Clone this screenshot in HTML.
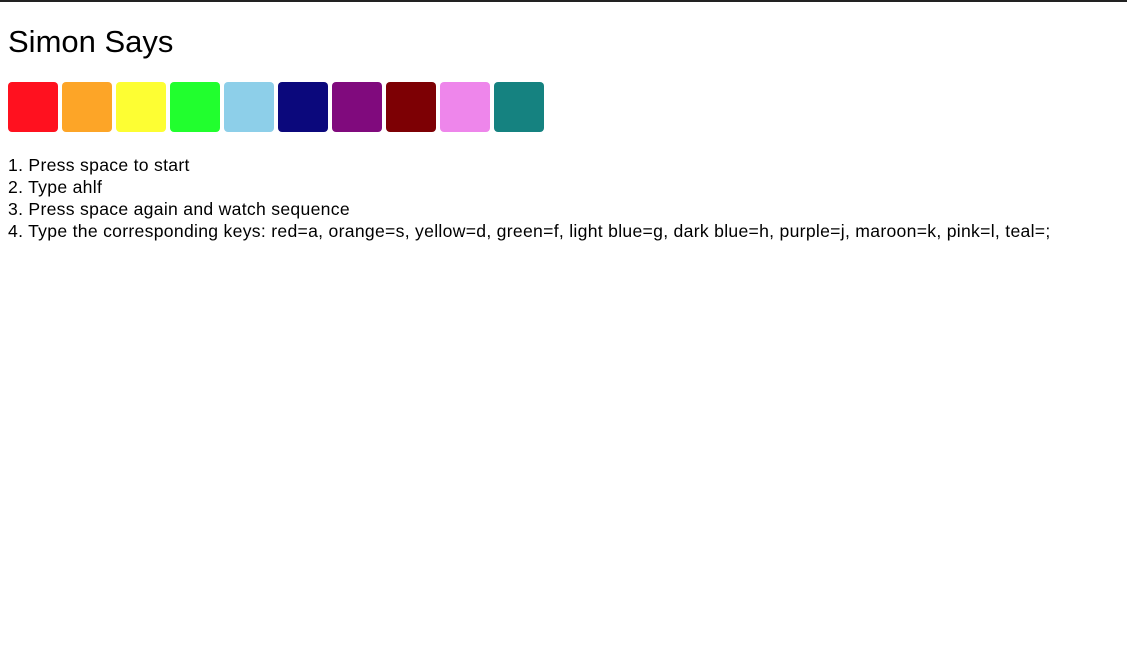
<!DOCTYPE html>
<html><head><style>
html,body{margin:0;padding:0;background:#fff;}
body{border-top:2px solid #222;font-family:"Liberation Sans",sans-serif;color:#000;width:1127px;height:655px;overflow:hidden;}
h1{font-weight:normal;font-size:31px;margin:0;position:absolute;left:8px;top:24px;}
.sq{position:absolute;top:82px;display:flex;left:8px;gap:4px;}
.sq div{width:50px;height:50px;border-radius:4px;}
.t{position:absolute;left:8px;top:154px;font-size:17.6px;line-height:22px;letter-spacing:0.29px;}
</style></head><body>
<h1>Simon Says</h1>
<div class="sq">
<div style="background:#ff111f"></div>
<div style="background:#fda527"></div>
<div style="background:#fdfe33"></div>
<div style="background:#21ff2e"></div>
<div style="background:#8dcfe9"></div>
<div style="background:#0b087c"></div>
<div style="background:#800a7d"></div>
<div style="background:#7d0004"></div>
<div style="background:#ee86eb"></div>
<div style="background:#158280"></div>
</div>
<div class="t">1. Press space to start<br>2. Type ahlf<br>3. Press space again and watch sequence<br>4. Type the corresponding keys: red=a, orange=s, yellow=d, green=f, light blue=g, dark blue=h, purple=j, maroon=k, pink=l, teal=;</div>
</body></html>
